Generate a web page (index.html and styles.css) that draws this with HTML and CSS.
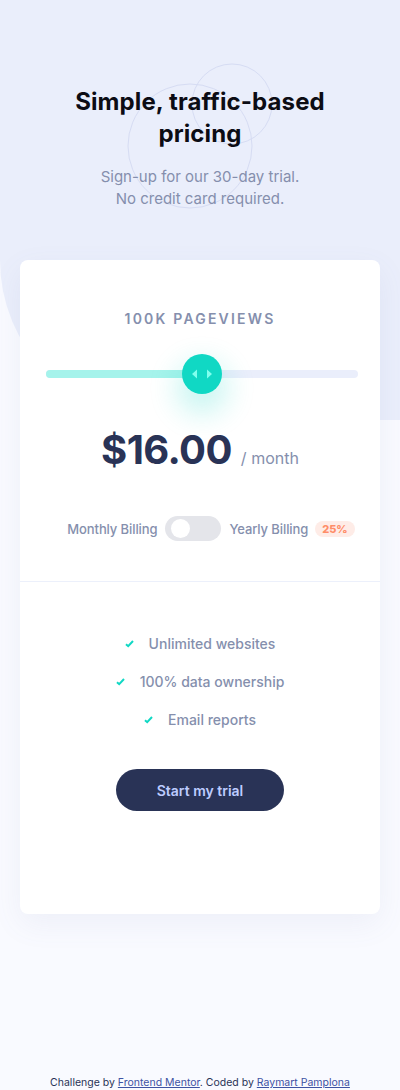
FILE: index.html
```html
<!DOCTYPE html>
<html lang="en">
<head>
<meta charset="utf-8">
<title>Interactive pricing component</title>
<link rel="stylesheet" href="styles.css">
</head>
<body>
<div class="page">
  <div class="hero-bg" aria-hidden="true">
    <svg class="circles" width="400" height="260" viewBox="0 0 400 260">
      <circle cx="190" cy="146" r="62" fill="none" stroke="#d6dcf3" stroke-width="1"/>
      <circle cx="232" cy="104" r="40" fill="none" stroke="#d6dcf3" stroke-width="1"/>
    </svg>
  </div>
  <header class="header">
    <h1 class="title">Simple, traffic-based<br>pricing</h1>
    <p class="subtitle">Sign-up for our 30-day trial.<br>No credit card required.</p>
  </header>

  <main class="card">
    <section class="card-top">
      <h2 class="pageviews">100K Pageviews</h2>
      <div class="slider">
        <div class="track">
          <div class="fill"></div>
          <div class="thumb">
            <svg width="22" height="12" viewBox="0 0 22 12">
              <path d="M6 1.5 L1 6 L6 10.5 Z" fill="#80ffee"/>
              <path d="M16 1.5 L21 6 L16 10.5 Z" fill="#80ffee"/>
            </svg>
          </div>
        </div>
      </div>
      <div class="price">
        <span class="amount">$16.00</span>
        <span class="per">/ month</span>
      </div>
      <div class="billing">
        <span class="billing-label">Monthly Billing</span>
        <span class="toggle"><span class="knob"></span></span>
        <span class="billing-label">Yearly Billing</span>
        <span class="badge">25%</span>
      </div>
    </section>
    <section class="card-bottom">
      <ul class="features">
        <li class="feature"><svg class="check" width="9" height="8" viewBox="0 0 9 8"><path d="M1 4.2 L3.2 6.2 L8 1" fill="none" stroke="#10d8c4" stroke-width="2"/></svg>Unlimited websites</li>
        <li class="feature"><svg class="check" width="9" height="8" viewBox="0 0 9 8"><path d="M1 4.2 L3.2 6.2 L8 1" fill="none" stroke="#10d8c4" stroke-width="2"/></svg>100% data ownership</li>
        <li class="feature"><svg class="check" width="9" height="8" viewBox="0 0 9 8"><path d="M1 4.2 L3.2 6.2 L8 1" fill="none" stroke="#10d8c4" stroke-width="2"/></svg>Email reports</li>
      </ul>
      <button class="cta" type="button">Start my trial</button>
    </section>
  </main>

  <footer class="attribution">
    Challenge by <a href="#">Frontend Mentor</a>. Coded by <a href="#">Raymart Pamplona</a>
  </footer>
</div>
</body>
</html>
```

FILE: styles.css
```css
* { box-sizing: border-box; }

html, body {
  margin: 0;
  padding: 0;
}

body {
  background: #f9faff;
  font-family: Inter, "Noto Sans", "Liberation Sans", sans-serif;
  color: #858fad;
}

.page {
  position: relative;
  width: 400px;
  min-height: 1090px;
  display: flex;
  flex-direction: column;
  align-items: center;
}

.hero-bg {
  position: absolute;
  top: 0;
  left: 0;
  width: 400px;
  height: 420px;
  background: #eaeefb;
  border-bottom-left-radius: 160px;
  z-index: 0;
}

.circles {
  position: absolute;
  top: 0;
  left: 0;
}

.header {
  position: relative;
  z-index: 1;
  padding-top: 86px;
  text-align: center;
}

.title {
  margin: 0;
  font-size: 24px;
  line-height: 32px;
  font-weight: 700;
  color: #0c0c14;
  letter-spacing: 0.1px;
}

.subtitle {
  margin: 16px 0 0;
  font-size: 15px;
  line-height: 22px;
  font-weight: 400;
  color: #858fad;
}

.card {
  position: relative;
  z-index: 1;
  margin-top: 50px;
  width: 360px;
  height: 654px;
  background: #ffffff;
  border-radius: 8px;
  box-shadow: 0 10px 30px rgba(100, 110, 160, 0.08);
}

.card-top {
  padding-top: 49px;
  height: 322px;
  border-bottom: 1px solid #ecf0fb;
  display: flex;
  flex-direction: column;
  align-items: center;
}

.pageviews {
  margin: 0;
  font-size: 14px;
  line-height: 20px;
  font-weight: 600;
  letter-spacing: 2.2px;
  text-transform: uppercase;
  color: #858fad;
}

.slider {
  align-self: stretch;
  margin-top: 25px;
  height: 40px;
  padding: 0 22px 0 26px;
  display: flex;
  align-items: center;
}

.track {
  position: relative;
  width: 100%;
  height: 8px;
  border-radius: 4px;
  background: #eaeefb;
}

.fill {
  width: 156px;
  height: 8px;
  border-radius: 4px;
  background: #a5f3eb;
}

.thumb {
  position: absolute;
  top: -16px;
  left: 136px;
  width: 40px;
  height: 40px;
  border-radius: 50%;
  background: #10d8c4;
  box-shadow: 0 14px 28px 6px rgba(16, 216, 196, 0.22);
  display: flex;
  align-items: center;
  justify-content: center;
}

.price {
  margin-top: 28px;
  display: flex;
  align-items: baseline;
  gap: 9px;
  height: 56px;
}

.amount {
  font-size: 40px;
  line-height: 56px;
  font-weight: 700;
  color: #293356;
  letter-spacing: -0.6px;
}

.per {
  font-size: 16px;
  color: #858fad;
}

.billing {
  margin-top: 38px;
  padding-left: 22px;
  display: flex;
  align-items: center;
  gap: 8px;
}

.billing-label {
  font-size: 13px;
  line-height: 18px;
  font-weight: 500;
  color: #858fad;
  letter-spacing: -0.1px;
}

.toggle {
  width: 56px;
  height: 25px;
  border-radius: 13px;
  background: #e4e5ea;
  padding: 3px 0 0 6px;
  display: flex;
}

.knob {
  width: 19px;
  height: 19px;
  border-radius: 50%;
  background: #ffffff;
}

.badge {
  margin-left: -1px;
  padding: 0 7px;
  height: 16px;
  line-height: 16px;
  border-radius: 8px;
  background: #feece7;
  color: #ff8d68;
  font-size: 11px;
  font-weight: 800;
}

.card-bottom {
  padding-top: 52px;
  display: flex;
  flex-direction: column;
  align-items: center;
}

.features {
  list-style: none;
  margin: 0;
  padding: 0;
  display: flex;
  flex-direction: column;
  align-items: center;
  gap: 18px;
}

.feature {
  display: flex;
  align-items: center;
  gap: 15px;
  font-size: 14px;
  line-height: 20px;
  font-weight: 500;
  color: #858fad;
}

.check {
  flex: none;
}

.cta {
  margin-top: 39px;
  width: 168px;
  height: 42px;
  border: none;
  border-radius: 21px;
  background: #293356;
  color: #bdccff;
  font-family: inherit;
  font-size: 14px;
  font-weight: 600;
}

.attribution {
  margin-top: auto;
  padding-bottom: 1px;
  font-size: 10.5px;
  line-height: 12px;
  color: #293356;
  text-align: center;
}

.attribution a {
  color: #3e52a3;
}
```
